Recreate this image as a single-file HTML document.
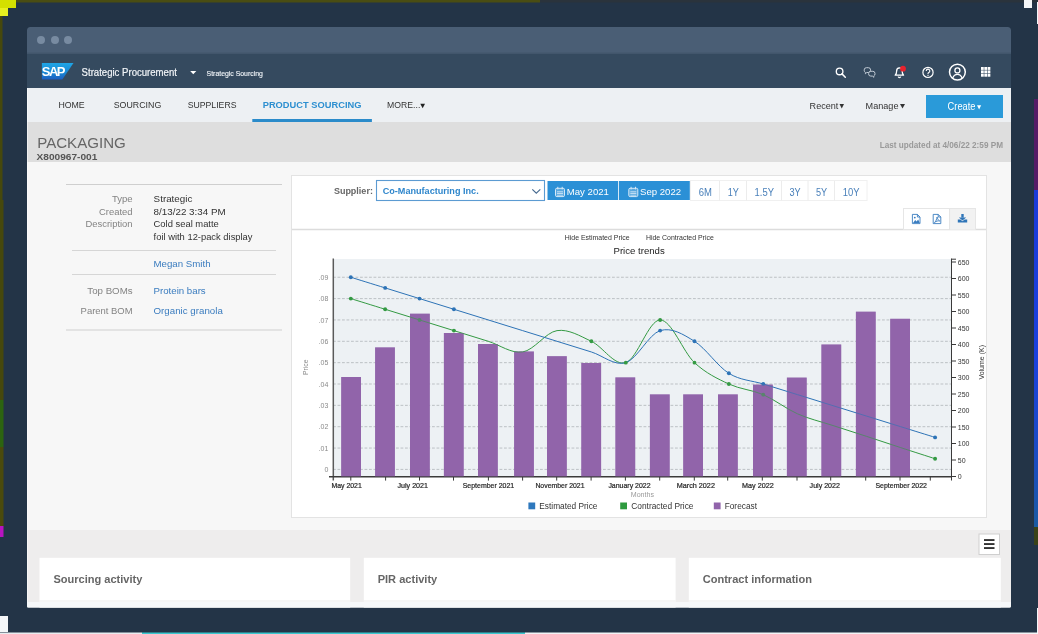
<!DOCTYPE html>
<html><head><meta charset="utf-8"><style>
html,body{margin:0;padding:0;width:1038px;height:634px;overflow:hidden;background:#233447}
svg{display:block;will-change:transform;font-family:"Liberation Sans", sans-serif}
</style></head><body>
<svg width="1038" height="634" viewBox="0 0 1038 634">
<rect x="0" y="0" width="1038" height="634" fill="#233447" />
<rect x="0" y="0" width="540" height="2.5" fill="#4a4d12" />
<rect x="540" y="0" width="498" height="2.5" fill="#2a333c" />
<rect x="0" y="0" width="2.5" height="200" fill="#46480c" />
<rect x="0" y="200" width="3.5" height="200" fill="#46480c" />
<rect x="0" y="400" width="3.5" height="47" fill="#2c6410" />
<rect x="0" y="447" width="3.5" height="79" fill="#4a4a0c" />
<rect x="0" y="526" width="3.5" height="11" fill="#b814c0" />
<rect x="0" y="0" width="16" height="8" fill="#d4e000" />
<rect x="0" y="8" width="8" height="8" fill="#e8f020" />
<rect x="1024" y="0" width="8" height="8" fill="#f4f6f8" />
<rect x="1037" y="2" width="1" height="22" fill="#f4f6f8" />
<rect x="1034" y="99" width="4" height="91" fill="#561c66" />
<defs><linearGradient id="rg" x1="0" y1="0" x2="0" y2="1"><stop offset="0" stop-color="#1a3ad8"/><stop offset="0.5" stop-color="#1a40dc"/><stop offset="0.8" stop-color="#1a4cc0"/><stop offset="1" stop-color="#1a5aa0"/></linearGradient></defs>
<rect x="1034" y="190" width="4" height="337" fill="url(#rg)" />
<rect x="1034" y="527" width="4" height="18" fill="#3a4218" />
<rect x="0" y="616" width="8" height="16" fill="#f4f6f8" />
<rect x="0" y="632.5" width="142" height="1.5" fill="#e8ecef" />
<rect x="142" y="632.5" width="383" height="1.5" fill="#3cc8d0" />
<rect x="525" y="632.5" width="513" height="1.5" fill="#f2f4f6" />
<rect x="1037" y="608" width="1" height="26" fill="#f4f6f8" />
<clipPath id="win"><path d="M27,607.5 V30.5 a3.5,3.5 0 0 1 3.5,-3.5 H1007.5 a3.5,3.5 0 0 1 3.5,3.5 V606 a1.5,1.5 0 0 1 -1.5,1.5 H28.5 a1.5,1.5 0 0 1 -1.5,-1.5 z"/></clipPath>
<g clip-path="url(#win)">
<rect x="27" y="27" width="984" height="27" fill="#4a5e75" />
<rect x="27" y="52.5" width="984" height="1.5" fill="#42566c" />
<circle cx="41" cy="40" r="4" fill="#788ba1"/>
<circle cx="55" cy="40" r="4" fill="#788ba1"/>
<circle cx="68" cy="40" r="4" fill="#788ba1"/>
<rect x="27" y="54" width="984" height="34" fill="#354a5f" />
<rect x="27" y="88" width="984" height="34" fill="#edf0f3" />
<rect x="27" y="122" width="984" height="40" fill="#dedede" />
<rect x="27" y="162" width="984" height="368" fill="#f7f7f7" />
<rect x="27" y="530" width="984" height="78" fill="#eeeded" />
<line x1="27.5" y1="88" x2="27.5" y2="608" stroke="#ffffff" stroke-width="1" opacity="0.5"/>
<defs><linearGradient id="sapg" x1="0" y1="0" x2="0" y2="1"><stop offset="0" stop-color="#1fa6e6"/><stop offset="0.6" stop-color="#1a86d4"/><stop offset="1" stop-color="#1d5ec0"/></linearGradient></defs>
<polygon points="41.9,63 73.5,63 62.3,79.6 41.9,79.6" fill="url(#sapg)"/>
<text x="41.8" y="75.9" font-size="13" fill="#fff" font-weight="bold" letter-spacing="-1.5">SAP</text>
<text x="81.6" y="76.0" font-size="10.2" fill="#f2f5f8" textLength="95.3" lengthAdjust="spacingAndGlyphs" stroke="#f2f5f8" stroke-width="0.2">Strategic Procurement</text>
<polygon points="190.2,70.9 196.3,70.9 193.25,74.2" fill="#fff"/>
<text x="206.6" y="76.0" font-size="7.8" fill="#eef2f6" textLength="56.3" lengthAdjust="spacingAndGlyphs" stroke="#eef2f6" stroke-width="0.15">Strategic Sourcing</text>
<g fill="none" stroke="#fff" stroke-width="1.35">
<circle cx="839.6" cy="71.4" r="3.3"/><line x1="842.0" y1="73.9" x2="845.3" y2="77.2" stroke-linecap="round" stroke-width="1.5"/>
</g>
<g fill="none" stroke="#c3ccd6" stroke-width="1.0">
<path d="M866.4,67.7 h2 a2.2,2.2 0 0 1 2.2,2.2 v0.4 a2.2,2.2 0 0 1 -2.2,2.2 h-1.6 l-1.4,1.3 v-1.4 a2.2,2.2 0 0 1 -1.2,-2.1 v-0.4 a2.2,2.2 0 0 1 2.2,-2.2 z"/>
<path d="M870.8,71.3 h2 a2.2,2.2 0 0 1 2.2,2.2 v0.4 a2.2,2.2 0 0 1 -1.2,2 v1.4 l-1.4,-1.2 h-1.6 a2.2,2.2 0 0 1 -2.2,-2.2 v-0.4 a2.2,2.2 0 0 1 2.2,-2.2 z" fill="#354a5f"/>
</g>
<g fill="none" stroke="#fff" stroke-width="1.3">
<path d="M895.2,75.2 c1.4,-1.2 1.4,-2.6 1.4,-4 c0,-1.9 1.2,-3.3 2.8,-3.3 c1.6,0 2.8,1.4 2.8,3.3 c0,1.4 0,2.8 1.4,4 z" stroke-linejoin="round"/>
<path d="M898.2,76.6 a1.3,1.3 0 0 0 2.5,0"/>
</g>
<circle cx="903.0" cy="68.7" r="2.9" fill="#e8232d"/>
<circle cx="928" cy="72.4" r="5.1" fill="none" stroke="#fff" stroke-width="1.2"/>
<path d="M926.2,70.9 a1.8,1.8 0 1 1 2.6,1.6 c-0.6,0.3 -0.8,0.7 -0.8,1.3 v0.4" fill="none" stroke="#fff" stroke-width="1.1"/>
<circle cx="928" cy="75.6" r="0.7" fill="#fff"/>
<circle cx="957.4" cy="72.1" r="7.9" fill="none" stroke="#fff" stroke-width="1.5"/>
<circle cx="957.4" cy="70.4" r="2.5" fill="none" stroke="#fff" stroke-width="1.3"/>
<path d="M952.6,78.2 c0.9,-2.4 2.6,-3.8 4.8,-3.8 c2.2,0 3.9,1.4 4.8,3.8" fill="none" stroke="#fff" stroke-width="1.3"/>

<rect x="981.0" y="67.0" width="2.75" height="2.9" fill="#fff" />
<rect x="984.3" y="67.0" width="2.75" height="2.9" fill="#fff" />
<rect x="987.6" y="67.0" width="2.75" height="2.9" fill="#fff" />
<rect x="981.0" y="70.4" width="2.75" height="2.9" fill="#fff" />
<rect x="984.3" y="70.4" width="2.75" height="2.9" fill="#fff" />
<rect x="987.6" y="70.4" width="2.75" height="2.9" fill="#fff" />
<rect x="981.0" y="73.8" width="2.75" height="2.9" fill="#fff" />
<rect x="984.3" y="73.8" width="2.75" height="2.9" fill="#fff" />
<rect x="987.6" y="73.8" width="2.75" height="2.9" fill="#fff" />
<text x="58.4" y="107.8" font-size="9.2" fill="#333" textLength="26.3" lengthAdjust="spacingAndGlyphs" >HOME</text>
<text x="113.7" y="107.8" font-size="9.2" fill="#333" textLength="47.6" lengthAdjust="spacingAndGlyphs" >SOURCING</text>
<text x="187.7" y="107.8" font-size="9.2" fill="#333" textLength="48.8" lengthAdjust="spacingAndGlyphs" >SUPPLIERS</text>
<text x="262.7" y="107.9" font-size="9.1" fill="#2d8fd0" font-weight="bold" textLength="98.8" lengthAdjust="spacingAndGlyphs" >PRODUCT SOURCING</text>
<rect x="252.3" y="119" width="119.6" height="3" fill="#2b8bca" />
<text x="387.1" y="107.8" font-size="9.3" fill="#333" textLength="33.2" lengthAdjust="spacingAndGlyphs" >MORE...</text>
<polygon points="420.3,103.8 425,103.8 422.65,108.2" fill="#222"/>
<text x="809.6" y="109.2" font-size="9.9" fill="#333" textLength="28.8" lengthAdjust="spacingAndGlyphs" >Recent</text>
<polygon points="839.5,104 844,104 841.75,108.5" fill="#333"/>
<text x="865.6" y="109.2" font-size="9.9" fill="#333" textLength="32.9" lengthAdjust="spacingAndGlyphs" >Manage</text>
<polygon points="900,104 905,104 902.5,108.5" fill="#333"/>
<rect x="926" y="95" width="77" height="23" fill="#2a9ad9" />
<text x="947.6" y="109.6" font-size="10.0" fill="#fff" textLength="27.9" lengthAdjust="spacingAndGlyphs" >Create</text>
<polygon points="977,105.2 981.2,105.2 979.1,109.4" fill="#fff"/>
<text x="37.2" y="147.6" font-size="15.4" fill="#666" textLength="88.6" lengthAdjust="spacingAndGlyphs" >PACKAGING</text>
<text x="36.5" y="159.5" font-size="9.9" fill="#555" font-weight="bold" textLength="60.8" lengthAdjust="spacingAndGlyphs" >X800967-001</text>
<text x="1003" y="147.8" font-size="8.2" fill="#999" font-weight="bold" text-anchor="end" >Last updated at 4/06/22 2:59 PM</text>
<line x1="66" y1="184.5" x2="282" y2="184.5" stroke="#cfcfcf" stroke-width="1" />
<line x1="72" y1="250.5" x2="276" y2="250.5" stroke="#d6d6d6" stroke-width="1" />
<line x1="72" y1="274.5" x2="276" y2="274.5" stroke="#d6d6d6" stroke-width="1" />
<line x1="66" y1="330" x2="282" y2="330" stroke="#cfcfcf" stroke-width="1" />
<text x="132.6" y="201.9" font-size="9.5" fill="#838383" text-anchor="end" textLength="20.7" lengthAdjust="spacingAndGlyphs" >Type</text>
<text x="153.6" y="201.9" font-size="9.6" fill="#333" textLength="38.800000000000004" lengthAdjust="spacingAndGlyphs" >Strategic</text>
<text x="132.6" y="214.7" font-size="9.5" fill="#838383" text-anchor="end" textLength="33.6" lengthAdjust="spacingAndGlyphs" >Created</text>
<text x="153.6" y="214.7" font-size="9.6" fill="#333" textLength="72.1" lengthAdjust="spacingAndGlyphs" >8/13/22 3:34 PM</text>
<text x="132.6" y="227.4" font-size="9.5" fill="#838383" text-anchor="end" textLength="47.1" lengthAdjust="spacingAndGlyphs" >Description</text>
<text x="153.6" y="227.4" font-size="9.6" fill="#333" textLength="65.19999999999999" lengthAdjust="spacingAndGlyphs" >Cold seal matte</text>
<text x="153.6" y="240.1" font-size="9.5" fill="#333" textLength="98.9" lengthAdjust="spacingAndGlyphs" >foil with 12-pack display</text>
<text x="153.5" y="267.2" font-size="9.6" fill="#3a7cbf" textLength="57.1" lengthAdjust="spacingAndGlyphs" >Megan Smith</text>
<text x="132.6" y="294.4" font-size="9.6" fill="#838383" text-anchor="end" textLength="45.3" lengthAdjust="spacingAndGlyphs" >Top BOMs</text>
<text x="153.5" y="294.4" font-size="9.6" fill="#3a7cbf" textLength="52.2" lengthAdjust="spacingAndGlyphs" >Protein bars</text>
<text x="132.6" y="313.9" font-size="9.6" fill="#838383" text-anchor="end" textLength="52.0" lengthAdjust="spacingAndGlyphs" >Parent BOM</text>
<text x="153.5" y="313.9" font-size="9.7" fill="#3a7cbf" textLength="69.3" lengthAdjust="spacingAndGlyphs" >Organic granola</text>
<rect x="291.5" y="175.5" width="695" height="342" fill="#ffffff" stroke="#e3e3e3" stroke-width="1"/>
<line x1="292" y1="229.5" x2="986" y2="229.5" stroke="#dcdcdc" stroke-width="1.5" />
<text x="372.9" y="193.8" font-size="9.0" fill="#666" font-weight="bold" text-anchor="end" >Supplier:</text>
<rect x="376.5" y="180.5" width="168" height="20" fill="#fff" stroke="#5c9bd2" stroke-width="1.1"/>
<text x="382.7" y="193.9" font-size="9.1" fill="#2e86cc" font-weight="bold" >Co-Manufacturing Inc.</text>
<polyline points="532.3,189.4 536.3,193.2 540.3,189.4" fill="none" stroke="#4a6d92" stroke-width="1.2"/>
<rect x="547.5" y="181" width="70.5" height="19" fill="#2b90d6" />
<rect x="618.8" y="181" width="71" height="19" fill="#2b90d6" />
<g fill="none" stroke="#d6e9f8" stroke-width="1"><rect x="555.5" y="188.3" width="9" height="8.3" rx="1.3" fill="#ffffff" fill-opacity="0.22"/>
<line x1="557.8" y1="186.8" x2="557.8" y2="189.4"/><line x1="562.2" y1="186.8" x2="562.2" y2="189.4"/></g>
<g fill="#d6e9f8"><rect x="557" y="191.4" width="6" height="0.9"/><rect x="557" y="193.20000000000002" width="6" height="0.9"/><rect x="557" y="194.9" width="6" height="0.6"/></g>
<g fill="none" stroke="#d6e9f8" stroke-width="1"><rect x="628.8" y="188.3" width="9" height="8.3" rx="1.3" fill="#ffffff" fill-opacity="0.22"/>
<line x1="631.0999999999999" y1="186.8" x2="631.0999999999999" y2="189.4"/><line x1="635.5" y1="186.8" x2="635.5" y2="189.4"/></g>
<g fill="#d6e9f8"><rect x="630.3" y="191.4" width="6" height="0.9"/><rect x="630.3" y="193.20000000000002" width="6" height="0.9"/><rect x="630.3" y="194.9" width="6" height="0.6"/></g>
<text x="566.8" y="195.1" font-size="9.6" fill="#fff" >May 2021</text>
<text x="640" y="195.1" font-size="9.6" fill="#fff" >Sep 2022</text>
<rect x="690.5" y="180.5" width="176.5" height="20" fill="#fff" stroke="#f0f0f0" stroke-width="1"/>
<line x1="719.5" y1="181" x2="719.5" y2="200.5" stroke="#ececec" stroke-width="1" />
<line x1="746.5" y1="181" x2="746.5" y2="200.5" stroke="#ececec" stroke-width="1" />
<line x1="781.5" y1="181" x2="781.5" y2="200.5" stroke="#ececec" stroke-width="1" />
<line x1="808" y1="181" x2="808" y2="200.5" stroke="#ececec" stroke-width="1" />
<line x1="834.5" y1="181" x2="834.5" y2="200.5" stroke="#ececec" stroke-width="1" />
<text x="705.3" y="195.5" font-size="10.1" fill="#4a80ba" text-anchor="middle" textLength="13.2" lengthAdjust="spacingAndGlyphs" >6M</text>
<text x="733.3" y="195.5" font-size="10.1" fill="#4a80ba" text-anchor="middle" textLength="11.2" lengthAdjust="spacingAndGlyphs" >1Y</text>
<text x="764.3" y="195.5" font-size="10.1" fill="#4a80ba" text-anchor="middle" textLength="19.4" lengthAdjust="spacingAndGlyphs" >1.5Y</text>
<text x="795.05" y="195.5" font-size="10.1" fill="#4a80ba" text-anchor="middle" textLength="11.2" lengthAdjust="spacingAndGlyphs" >3Y</text>
<text x="821.55" y="195.5" font-size="10.1" fill="#4a80ba" text-anchor="middle" textLength="11.2" lengthAdjust="spacingAndGlyphs" >5Y</text>
<text x="851.05" y="195.5" font-size="10.1" fill="#4a80ba" text-anchor="middle" textLength="16.8" lengthAdjust="spacingAndGlyphs" >10Y</text>
<rect x="903.5" y="208.5" width="72" height="21" fill="#fff" stroke="#e6e6e6" stroke-width="1"/>
<rect x="950" y="209" width="25" height="20.5" fill="#f2f2f2" />
<line x1="949.6" y1="209" x2="949.6" y2="229.5" stroke="#e3e3e3" stroke-width="1" />
<g fill="none" stroke="#3a7dc0" stroke-width="0.9">
<path d="M912.4,214.4 h5 l2.6,2.6 v6.6 h-7.6 z M917.4,214.4 v2.6 h2.6"/>
<path d="M933.2,214.4 h5 l2.6,2.6 v6.6 h-7.6 z M938.2,214.4 v2.6 h2.6"/>
<path d="M934.5,222.6 c1.2,-1.2 2.2,-3 2.6,-5.6 c0.2,1.6 1.2,3.2 2.6,4 c-1.6,-0.4 -3.6,0 -5.2,1.6"/>
</g>
<g fill="#3a7dc0"><path d="M913,223 l2.2,-3 l1.4,1.4 l1.6,-2 l1.6,3.6 z"/><circle cx="914.8" cy="217.6" r="0.9"/></g>
<g fill="#2f75b8"><rect x="961.3" y="214" width="2.4" height="3.6"/><polygon points="958.8,217.4 966.2,217.4 962.5,220.6"/>
<path d="M957.8,219.6 h2.6 l2.1,1.6 l2.1,-1.6 h2.6 v3 h-9.4 z"/></g>

<text x="613.5" y="254.0" font-size="9.6" fill="#222" >Price trends</text>
<text x="564.8" y="240.1" font-size="6.95" fill="#333" >Hide Estimated Price</text>
<text x="645.9" y="240.1" font-size="6.95" fill="#333" >Hide Contracted Price</text>
<rect x="333" y="259" width="618" height="217.5" fill="#edf1f4" />
<line x1="333" y1="469.4" x2="951" y2="469.4" stroke="#b4b8bc" stroke-width="0.85" stroke-dasharray="2.8,1.7"/>
<text x="328.3" y="472.0" font-size="7.0" fill="#8a8a8a" text-anchor="end" >0</text>
<line x1="333" y1="448.04999999999995" x2="951" y2="448.04999999999995" stroke="#b4b8bc" stroke-width="0.85" stroke-dasharray="2.8,1.7"/>
<text x="328.3" y="450.65" font-size="7.0" fill="#8a8a8a" text-anchor="end" >.01</text>
<line x1="333" y1="426.7" x2="951" y2="426.7" stroke="#b4b8bc" stroke-width="0.85" stroke-dasharray="2.8,1.7"/>
<text x="328.3" y="429.3" font-size="7.0" fill="#8a8a8a" text-anchor="end" >.02</text>
<line x1="333" y1="405.34999999999997" x2="951" y2="405.34999999999997" stroke="#b4b8bc" stroke-width="0.85" stroke-dasharray="2.8,1.7"/>
<text x="328.3" y="407.95" font-size="7.0" fill="#8a8a8a" text-anchor="end" >.03</text>
<line x1="333" y1="384.0" x2="951" y2="384.0" stroke="#b4b8bc" stroke-width="0.85" stroke-dasharray="2.8,1.7"/>
<text x="328.3" y="386.6" font-size="7.0" fill="#8a8a8a" text-anchor="end" >.04</text>
<line x1="333" y1="362.65" x2="951" y2="362.65" stroke="#b4b8bc" stroke-width="0.85" stroke-dasharray="2.8,1.7"/>
<text x="328.3" y="365.25" font-size="7.0" fill="#8a8a8a" text-anchor="end" >.05</text>
<line x1="333" y1="341.29999999999995" x2="951" y2="341.29999999999995" stroke="#b4b8bc" stroke-width="0.85" stroke-dasharray="2.8,1.7"/>
<text x="328.3" y="343.9" font-size="7.0" fill="#8a8a8a" text-anchor="end" >.06</text>
<line x1="333" y1="319.94999999999993" x2="951" y2="319.94999999999993" stroke="#b4b8bc" stroke-width="0.85" stroke-dasharray="2.8,1.7"/>
<text x="328.3" y="322.54999999999995" font-size="7.0" fill="#8a8a8a" text-anchor="end" >.07</text>
<line x1="333" y1="298.59999999999997" x2="951" y2="298.59999999999997" stroke="#b4b8bc" stroke-width="0.85" stroke-dasharray="2.8,1.7"/>
<text x="328.3" y="301.2" font-size="7.0" fill="#8a8a8a" text-anchor="end" >.08</text>
<line x1="333" y1="277.25" x2="951" y2="277.25" stroke="#b4b8bc" stroke-width="0.85" stroke-dasharray="2.8,1.7"/>
<text x="328.3" y="279.85" font-size="7.0" fill="#8a8a8a" text-anchor="end" >.09</text>
<rect x="341.2" y="377" width="19.8" height="99.80000000000001" fill="#9164ab" />
<rect x="375.1" y="347.4" width="19.8" height="129.40000000000003" fill="#9164ab" />
<rect x="410.0" y="313.7" width="19.8" height="163.10000000000002" fill="#9164ab" />
<rect x="443.9" y="333" width="19.8" height="143.8" fill="#9164ab" />
<rect x="478.0" y="344" width="19.8" height="132.8" fill="#9164ab" />
<rect x="514.1" y="351.5" width="19.8" height="125.30000000000001" fill="#9164ab" />
<rect x="547.0" y="356.2" width="19.8" height="120.60000000000002" fill="#9164ab" />
<rect x="581.3" y="363" width="19.8" height="113.80000000000001" fill="#9164ab" />
<rect x="615.4" y="377.4" width="19.8" height="99.40000000000003" fill="#9164ab" />
<rect x="649.9" y="394.4" width="19.8" height="82.40000000000003" fill="#9164ab" />
<rect x="683.2" y="394.4" width="19.8" height="82.40000000000003" fill="#9164ab" />
<rect x="718.0" y="394.4" width="19.8" height="82.40000000000003" fill="#9164ab" />
<rect x="753.0" y="384.6" width="19.8" height="92.19999999999999" fill="#9164ab" />
<rect x="786.9" y="377.6" width="19.8" height="99.19999999999999" fill="#9164ab" />
<rect x="821.4" y="344.5" width="19.8" height="132.3" fill="#9164ab" />
<rect x="855.9" y="311.7" width="19.8" height="165.10000000000002" fill="#9164ab" />
<rect x="890.2" y="318.8" width="19.8" height="158.0" fill="#9164ab" />
<line x1="333.3" y1="258.5" x2="333.3" y2="480.5" stroke="#5a5a5a" stroke-width="1.5" />
<line x1="951.5" y1="258.5" x2="951.5" y2="480.5" stroke="#3a3a3a" stroke-width="1.0" />
<line x1="329" y1="476.8" x2="951.5" y2="476.8" stroke="#3a3a3a" stroke-width="1.4" />
<line x1="951.5" y1="259.2" x2="956" y2="259.2" stroke="#3a3a3a" stroke-width="1" />
<line x1="350.8" y1="476.8" x2="350.8" y2="480.6" stroke="#3a3a3a" stroke-width="1" />
<line x1="385.6" y1="476.8" x2="385.6" y2="480.6" stroke="#3a3a3a" stroke-width="1" />
<line x1="419.5" y1="476.8" x2="419.5" y2="480.6" stroke="#3a3a3a" stroke-width="1" />
<line x1="453.5" y1="476.8" x2="453.5" y2="480.6" stroke="#3a3a3a" stroke-width="1" />
<line x1="488.4" y1="476.8" x2="488.4" y2="480.6" stroke="#3a3a3a" stroke-width="1" />
<line x1="522.6" y1="476.8" x2="522.6" y2="480.6" stroke="#3a3a3a" stroke-width="1" />
<line x1="556.7" y1="476.8" x2="556.7" y2="480.6" stroke="#3a3a3a" stroke-width="1" />
<line x1="591.1" y1="476.8" x2="591.1" y2="480.6" stroke="#3a3a3a" stroke-width="1" />
<line x1="625.4" y1="476.8" x2="625.4" y2="480.6" stroke="#3a3a3a" stroke-width="1" />
<line x1="659.7" y1="476.8" x2="659.7" y2="480.6" stroke="#3a3a3a" stroke-width="1" />
<line x1="694.3" y1="476.8" x2="694.3" y2="480.6" stroke="#3a3a3a" stroke-width="1" />
<line x1="727.7" y1="476.8" x2="727.7" y2="480.6" stroke="#3a3a3a" stroke-width="1" />
<line x1="762.3" y1="476.8" x2="762.3" y2="480.6" stroke="#3a3a3a" stroke-width="1" />
<line x1="797.0" y1="476.8" x2="797.0" y2="480.6" stroke="#3a3a3a" stroke-width="1" />
<line x1="830.7" y1="476.8" x2="830.7" y2="480.6" stroke="#3a3a3a" stroke-width="1" />
<line x1="865.7" y1="476.8" x2="865.7" y2="480.6" stroke="#3a3a3a" stroke-width="1" />
<line x1="900.0" y1="476.8" x2="900.0" y2="480.6" stroke="#3a3a3a" stroke-width="1" />
<line x1="930.3" y1="476.8" x2="930.3" y2="480.6" stroke="#3a3a3a" stroke-width="1" />
<line x1="951.5" y1="476.5" x2="956" y2="476.5" stroke="#3a3a3a" stroke-width="1" />
<text x="957.8" y="479.1" font-size="7.0" fill="#333" >0</text>
<line x1="951.5" y1="460.0" x2="956" y2="460.0" stroke="#3a3a3a" stroke-width="1" />
<text x="957.8" y="462.6" font-size="7.0" fill="#333" >50</text>
<line x1="951.5" y1="443.5" x2="956" y2="443.5" stroke="#3a3a3a" stroke-width="1" />
<text x="957.8" y="446.1" font-size="7.0" fill="#333" >100</text>
<line x1="951.5" y1="427.0" x2="956" y2="427.0" stroke="#3a3a3a" stroke-width="1" />
<text x="957.8" y="429.6" font-size="7.0" fill="#333" >150</text>
<line x1="951.5" y1="410.5" x2="956" y2="410.5" stroke="#3a3a3a" stroke-width="1" />
<text x="957.8" y="413.1" font-size="7.0" fill="#333" >200</text>
<line x1="951.5" y1="394.0" x2="956" y2="394.0" stroke="#3a3a3a" stroke-width="1" />
<text x="957.8" y="396.6" font-size="7.0" fill="#333" >250</text>
<line x1="951.5" y1="377.5" x2="956" y2="377.5" stroke="#3a3a3a" stroke-width="1" />
<text x="957.8" y="380.1" font-size="7.0" fill="#333" >300</text>
<line x1="951.5" y1="361.0" x2="956" y2="361.0" stroke="#3a3a3a" stroke-width="1" />
<text x="957.8" y="363.6" font-size="7.0" fill="#333" >350</text>
<line x1="951.5" y1="344.5" x2="956" y2="344.5" stroke="#3a3a3a" stroke-width="1" />
<text x="957.8" y="347.1" font-size="7.0" fill="#333" >400</text>
<line x1="951.5" y1="328.0" x2="956" y2="328.0" stroke="#3a3a3a" stroke-width="1" />
<text x="957.8" y="330.6" font-size="7.0" fill="#333" >450</text>
<line x1="951.5" y1="311.5" x2="956" y2="311.5" stroke="#3a3a3a" stroke-width="1" />
<text x="957.8" y="314.1" font-size="7.0" fill="#333" >500</text>
<line x1="951.5" y1="295.0" x2="956" y2="295.0" stroke="#3a3a3a" stroke-width="1" />
<text x="957.8" y="297.6" font-size="7.0" fill="#333" >550</text>
<line x1="951.5" y1="278.5" x2="956" y2="278.5" stroke="#3a3a3a" stroke-width="1" />
<text x="957.8" y="281.1" font-size="7.0" fill="#333" >600</text>
<line x1="951.5" y1="262.0" x2="956" y2="262.0" stroke="#3a3a3a" stroke-width="1" />
<text x="957.8" y="264.6" font-size="7.0" fill="#333" >650</text>
<text x="0" y="0" font-size="6.8" fill="#8a8a8a" text-anchor="middle" transform="translate(308.2,367.3) rotate(-90)">Price</text>
<text x="0" y="0" font-size="7.0" fill="#333" text-anchor="middle" transform="translate(984.3,362.3) rotate(-90)">Volume (K)</text>
<text x="331.4" y="488.2" font-size="7.1" fill="#2a2a2a" textLength="30.400000000000002" lengthAdjust="spacingAndGlyphs" stroke="#2a2a2a" stroke-width="0.22">May 2021</text>
<text x="397.5" y="488.2" font-size="7.1" fill="#2a2a2a" textLength="30.5" lengthAdjust="spacingAndGlyphs" stroke="#2a2a2a" stroke-width="0.22">July 2021</text>
<text x="462.7" y="488.2" font-size="7.1" fill="#2a2a2a" textLength="51.5" lengthAdjust="spacingAndGlyphs" stroke="#2a2a2a" stroke-width="0.22">September 2021</text>
<text x="535.4" y="488.2" font-size="7.1" fill="#2a2a2a" textLength="49.1" lengthAdjust="spacingAndGlyphs" stroke="#2a2a2a" stroke-width="0.22">November 2021</text>
<text x="608.4" y="488.2" font-size="7.1" fill="#2a2a2a" textLength="42.2" lengthAdjust="spacingAndGlyphs" stroke="#2a2a2a" stroke-width="0.22">January 2022</text>
<text x="676.8" y="488.2" font-size="7.1" fill="#2a2a2a" textLength="38.1" lengthAdjust="spacingAndGlyphs" stroke="#2a2a2a" stroke-width="0.22">March 2022</text>
<text x="742.1" y="488.2" font-size="7.1" fill="#2a2a2a" textLength="31.6" lengthAdjust="spacingAndGlyphs" stroke="#2a2a2a" stroke-width="0.22">May 2022</text>
<text x="809.6" y="488.2" font-size="7.1" fill="#2a2a2a" textLength="30.3" lengthAdjust="spacingAndGlyphs" stroke="#2a2a2a" stroke-width="0.22">July 2022</text>
<text x="875.4" y="488.2" font-size="7.1" fill="#2a2a2a" textLength="51.6" lengthAdjust="spacingAndGlyphs" stroke="#2a2a2a" stroke-width="0.22">September 2022</text>
<text x="630.8" y="497.3" font-size="6.6" fill="#9a9a9a" textLength="23.2" lengthAdjust="spacingAndGlyphs" >Months</text>
<rect x="528.4" y="502.5" width="6.8" height="6.8" fill="#2e78bd" />
<text x="539.3" y="509.2" font-size="8.2" fill="#333" textLength="58.2" lengthAdjust="spacingAndGlyphs" >Estimated Price</text>
<rect x="620.2" y="502.5" width="6.8" height="6.8" fill="#2e9a3e" />
<text x="631.3" y="509.2" font-size="8.2" fill="#333" textLength="62.2" lengthAdjust="spacingAndGlyphs" >Contracted Price</text>
<rect x="713.8" y="502.5" width="6.8" height="6.8" fill="#9164ab" />
<text x="724.7" y="509.2" font-size="8.2" fill="#333" textLength="32.3" lengthAdjust="spacingAndGlyphs" >Forecast</text>
<path d="M350.80,298.60 C356.53,300.38 373.71,305.72 385.17,309.27 C396.63,312.83 408.08,316.39 419.54,319.95 C431.00,323.51 442.45,327.07 453.91,330.62 C465.37,334.18 476.82,337.74 488.28,341.30 C499.74,344.86 511.19,353.75 522.65,351.97 C534.11,350.20 545.56,332.40 557.02,330.62 C568.48,328.85 579.93,335.96 591.39,341.30 C602.85,346.64 614.30,366.21 625.76,362.65 C637.22,359.09 648.67,319.95 660.13,319.95 C671.59,319.95 683.04,351.97 694.50,362.65 C705.96,373.32 717.41,378.66 728.87,384.00 C740.33,389.34 751.78,389.69 763.24,394.67 C774.70,399.66 786.15,408.80 797.61,413.89 C809.07,418.98 820.52,421.47 831.98,425.21 C843.44,428.94 854.89,432.57 866.35,436.31 C877.81,440.04 889.26,443.89 900.72,447.62 C912.18,451.36 929.36,456.87 935.09,458.72" fill="none" stroke="#349a43" stroke-width="1.0"/>
<path d="M350.80,277.25 C356.53,279.03 373.71,284.37 385.17,287.92 C396.63,291.48 408.08,295.04 419.54,298.60 C431.00,302.16 442.45,305.72 453.91,309.27 C465.37,312.83 476.82,316.39 488.28,319.95 C499.74,323.51 511.19,327.07 522.65,330.62 C534.11,334.18 545.56,337.74 557.02,341.30 C568.48,344.86 579.93,348.42 591.39,351.97 C602.85,355.53 614.30,366.21 625.76,362.65 C637.22,359.09 648.67,334.18 660.13,330.62 C671.59,327.07 683.04,334.18 694.50,341.30 C705.96,348.42 717.41,366.21 728.87,373.32 C740.33,380.44 751.78,380.44 763.24,384.00 C774.70,387.56 786.15,391.12 797.61,394.67 C809.07,398.23 820.52,401.79 831.98,405.35 C843.44,408.91 854.89,412.47 866.35,416.02 C877.81,419.58 889.26,423.14 900.72,426.70 C912.18,430.26 929.36,435.60 935.09,437.38" fill="none" stroke="#2d73b6" stroke-width="1.0"/>
<circle cx="350.80" cy="298.60" r="1.95" fill="#349a43"/>
<circle cx="385.17" cy="309.27" r="1.95" fill="#349a43"/>
<circle cx="419.54" cy="319.95" r="1.95" fill="#349a43"/>
<circle cx="453.91" cy="330.62" r="1.95" fill="#349a43"/>
<circle cx="591.39" cy="341.30" r="1.95" fill="#349a43"/>
<circle cx="625.76" cy="362.65" r="1.95" fill="#349a43"/>
<circle cx="660.13" cy="319.95" r="1.95" fill="#349a43"/>
<circle cx="694.50" cy="362.65" r="1.95" fill="#349a43"/>
<circle cx="728.87" cy="384.00" r="1.95" fill="#349a43"/>
<circle cx="763.24" cy="394.67" r="1.95" fill="#349a43"/>
<circle cx="935.09" cy="458.72" r="1.95" fill="#349a43"/>
<circle cx="350.80" cy="277.25" r="1.95" fill="#2d73b6"/>
<circle cx="385.17" cy="287.92" r="1.95" fill="#2d73b6"/>
<circle cx="419.54" cy="298.60" r="1.95" fill="#2d73b6"/>
<circle cx="453.91" cy="309.27" r="1.95" fill="#2d73b6"/>
<circle cx="660.13" cy="330.62" r="1.95" fill="#2d73b6"/>
<circle cx="694.50" cy="341.30" r="1.95" fill="#2d73b6"/>
<circle cx="728.87" cy="373.32" r="1.95" fill="#2d73b6"/>
<circle cx="763.24" cy="384.00" r="1.95" fill="#2d73b6"/>
<circle cx="935.09" cy="437.38" r="1.95" fill="#2d73b6"/>
<rect x="341.2" y="377" width="19.8" height="99.80000000000001" fill="#9164ab" fill-opacity="0.4"/>
<rect x="375.1" y="347.4" width="19.8" height="129.40000000000003" fill="#9164ab" fill-opacity="0.4"/>
<rect x="410.0" y="313.7" width="19.8" height="163.10000000000002" fill="#9164ab" fill-opacity="0.4"/>
<rect x="443.9" y="333" width="19.8" height="143.8" fill="#9164ab" fill-opacity="0.4"/>
<rect x="478.0" y="344" width="19.8" height="132.8" fill="#9164ab" fill-opacity="0.4"/>
<rect x="514.1" y="351.5" width="19.8" height="125.30000000000001" fill="#9164ab" fill-opacity="0.4"/>
<rect x="547.0" y="356.2" width="19.8" height="120.60000000000002" fill="#9164ab" fill-opacity="0.4"/>
<rect x="581.3" y="363" width="19.8" height="113.80000000000001" fill="#9164ab" fill-opacity="0.4"/>
<rect x="615.4" y="377.4" width="19.8" height="99.40000000000003" fill="#9164ab" fill-opacity="0.4"/>
<rect x="649.9" y="394.4" width="19.8" height="82.40000000000003" fill="#9164ab" fill-opacity="0.4"/>
<rect x="683.2" y="394.4" width="19.8" height="82.40000000000003" fill="#9164ab" fill-opacity="0.4"/>
<rect x="718.0" y="394.4" width="19.8" height="82.40000000000003" fill="#9164ab" fill-opacity="0.4"/>
<rect x="753.0" y="384.6" width="19.8" height="92.19999999999999" fill="#9164ab" fill-opacity="0.4"/>
<rect x="786.9" y="377.6" width="19.8" height="99.19999999999999" fill="#9164ab" fill-opacity="0.4"/>
<rect x="821.4" y="344.5" width="19.8" height="132.3" fill="#9164ab" fill-opacity="0.4"/>
<rect x="855.9" y="311.7" width="19.8" height="165.10000000000002" fill="#9164ab" fill-opacity="0.4"/>
<rect x="890.2" y="318.8" width="19.8" height="158.0" fill="#9164ab" fill-opacity="0.4"/>
<rect x="39.5" y="557.8" width="310.7" height="60" fill="#ffffff" />
<line x1="39.5" y1="601" x2="350.2" y2="601" stroke="#ebebeb" stroke-width="1.2" />
<text x="53.4" y="583.3" font-size="11.05" fill="#666" font-weight="bold" >Sourcing activity</text>
<rect x="363.8" y="557.8" width="311.8" height="60" fill="#ffffff" />
<line x1="363.8" y1="601" x2="675.6" y2="601" stroke="#ebebeb" stroke-width="1.2" />
<text x="377.7" y="583.3" font-size="11.05" fill="#666" font-weight="bold" >PIR activity</text>
<rect x="688.8" y="557.8" width="312.0" height="60" fill="#ffffff" />
<line x1="688.8" y1="601" x2="1000.8" y2="601" stroke="#ebebeb" stroke-width="1.2" />
<text x="702.6999999999999" y="583.3" font-size="11.05" fill="#666" font-weight="bold" >Contract information</text>
<rect x="27" y="602" width="984" height="6" fill="#f6f8fa" />
<rect x="979" y="534" width="20.5" height="20.5" fill="#fff" stroke="#cfcfcf" stroke-width="1"/>
<rect x="984" y="539.1" width="10.5" height="1.9" fill="#333" />
<rect x="984" y="543.1" width="10.5" height="1.9" fill="#333" />
<rect x="984" y="547.1" width="10.5" height="1.9" fill="#333" />
</g>
</svg>
</body></html>
